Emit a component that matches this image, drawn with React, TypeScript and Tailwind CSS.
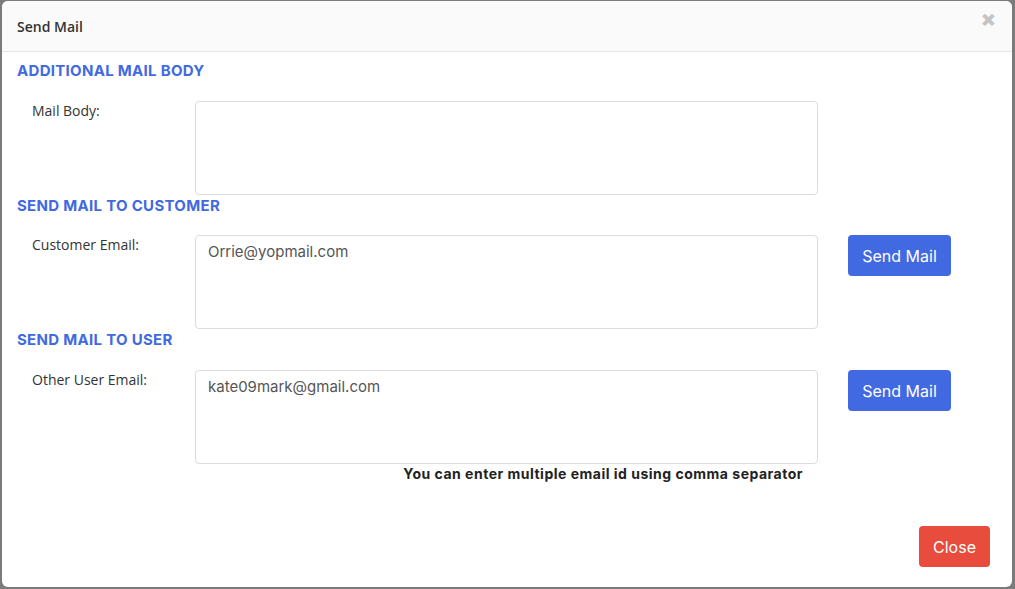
import React from "react";

const HEAD = "font-['Inter','Liberation_Sans',sans-serif]";
const BODY = "font-['Open_Sans','Liberation_Sans',sans-serif]";

function Section({ title, className = "" }: { title: string; className?: string }) {
  return (
    <h3 className={`${HEAD} ${className} text-[15px] leading-[20px] font-bold text-[#4169e1] tracking-[0.3px]`}>
      {title}
    </h3>
  );
}

function Row({
  label,
  value,
  button,
}: {
  label: string;
  value?: string;
  button?: boolean;
}) {
  return (
    <div className="flex">
      <label className={`${BODY} w-[178px] pl-[15px] text-[14px] leading-[20px] text-[#333]`}>
        {label}
      </label>
      <textarea
        defaultValue={value}
        className={`${HEAD} w-[623px] h-[94px] resize-none rounded-[4px] border border-[#dcdcdc] px-[12px] py-[5px] text-[15px] leading-[22px] text-[#555] outline-none`}
      />
      {button && (
        <button className={`${HEAD} ml-[30px] w-[103px] h-[41px] rounded-[4px] bg-[#4169e1] text-[16px] text-white`}>
          Send Mail
        </button>
      )}
    </div>
  );
}

export default function App() {
  return (
    <div className="w-[1015px] h-[589px] bg-[#7b7b7b] pt-[1px] pl-[2px] pr-[3px] pb-[2px]">
      <div className="flex flex-col w-[1010px] h-[586px] rounded-[6px] bg-white overflow-hidden">
        <div className="flex items-center justify-between h-[51px] bg-[#fafafa] border-b border-[#e5e5e5] pl-[15px] pr-[16px]">
          <h2 className={`${BODY} text-[14px] font-semibold text-[#333]`}>Send Mail</h2>
          <span className={`${HEAD} text-[22px] leading-none text-[#c4c4c4] font-black -mt-[16px]`}>×</span>
        </div>
        <div className="flex flex-col px-[15px] pt-[9px]">
          <Section title="ADDITIONAL MAIL BODY" />
          <div className="mt-[20px]">
            <Row label="Mail Body:" />
          </div>
          <Section title="SEND MAIL TO CUSTOMER" className="mt-[1px]" />
          <div className="mt-[19px]">
            <Row label="Customer Email:" value="Orrie@yopmail.com" button />
          </div>
          <Section title="SEND MAIL TO USER" className="mt-[1px]" />
          <div className="mt-[20px]">
            <Row label="Other User Email:" value="kate09mark@gmail.com" button />
          </div>
          <div className="flex">
            <p className={`${HEAD} w-[801px] pr-[15px] pt-[1px] text-right text-[14px] leading-[18px] font-bold tracking-[0.5px] text-[#222]`}>
              You can enter multiple email id using comma separator
            </p>
          </div>
        </div>
        <div className="flex justify-end mt-auto pr-[22px] pb-[20px]">
          <button className={`${HEAD} w-[71px] h-[41px] rounded-[4px] bg-[#e74c3c] text-[16px] text-white`}>
            Close
          </button>
        </div>
      </div>
    </div>
  );
}
